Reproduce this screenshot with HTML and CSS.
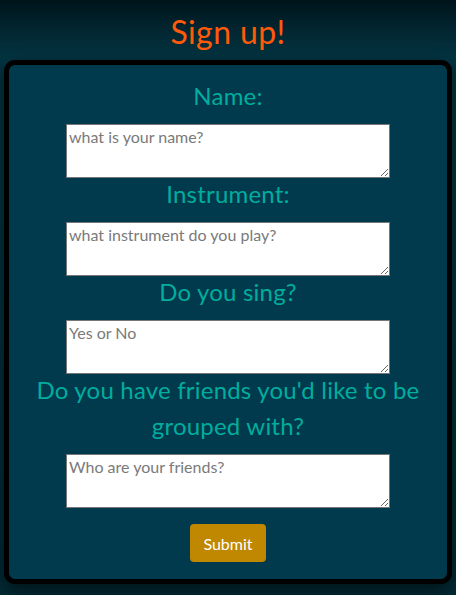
FILE: index.html
```html
<!DOCTYPE html>
<html lang="en">
<head>
<meta charset="utf-8">
<title>Sign up</title>
<link rel="stylesheet" href="styles.css">
</head>
<body>
<header class="top">
  <h1 class="title">Sign up!</h1>
</header>
<main class="card">
  <form class="form">
    <label class="label" for="name">Name:</label>
    <textarea class="field" id="name" placeholder="what is your name?"></textarea>
    <label class="label" for="instrument">Instrument:</label>
    <textarea class="field" id="instrument" placeholder="what instrument do you play?"></textarea>
    <label class="label" for="sing">Do you sing?</label>
    <textarea class="field" id="sing" placeholder="Yes or No"></textarea>
    <label class="label" for="friends">Do you have friends you'd like to be grouped with?</label>
    <textarea class="field" id="friends" placeholder="Who are your friends?"></textarea>
    <button class="submit" type="button">Submit</button>
  </form>
</main>
</body>
</html>
```
FILE: styles.css
```css
html, body {
  margin: 0;
  padding: 0;
}
body {
  width: 456px;
  height: 595px;
  overflow: hidden;
  background: linear-gradient(to bottom, #00141a 0px, #022631 30px, #033441 58px, #03323f 300px, #022a35 595px);
  font-family: Lato, "Open Sans", sans-serif;
}
.top {
  height: 60px;
  display: flex;
  justify-content: center;
  align-items: center;
}
.title {
  margin: 2px 0 0 0;
  font-size: 32px;
  font-weight: 400;
  color: #ff5a0a;
  letter-spacing: 0.4px;
}
.card {
  margin: 0 4px;
  height: 524px;
  box-sizing: border-box;
  border: 5px solid #000;
  border-radius: 11px;
  background: #003a4c;
  box-shadow: 0 6px 18px rgba(0, 0, 0, 0.55);
}
.form {
  display: flex;
  flex-direction: column;
  align-items: center;
  padding-top: 15px;
}
.label {
  color: #00ad9e;
  font-size: 24px;
  line-height: 36px;
  letter-spacing: 0.2px;
  text-align: center;
  padding: 0 20px;
  margin-top: -2px;
  margin-bottom: 10px;
}
.field {
  box-sizing: border-box;
  width: 324px;
  height: 54px;
  margin: 0;
  padding: 2px;
  border: 1px solid #767676;
  background: #fff;
  font-family: Lato, "Open Sans", sans-serif;
  font-size: 16px;
  color: #333;
  resize: vertical;
}
.field::placeholder {
  color: #7a7a7a;
}
.submit {
  margin-top: 16px;
  width: 76px;
  height: 38px;
  border: none;
  border-radius: 4px;
  background: #bf8800;
  color: #fff;
  font-family: Lato, "Open Sans", sans-serif;
  font-size: 16px;
  padding: 0;
}
```
